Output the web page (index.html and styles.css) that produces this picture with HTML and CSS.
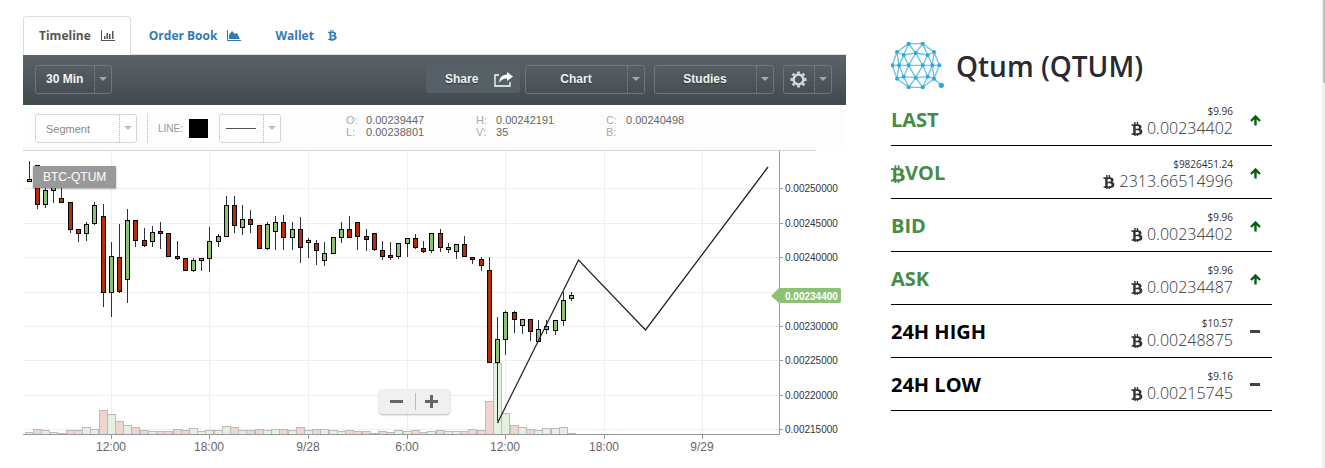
FILE: index.html
```html
<!DOCTYPE html>
<html lang="en">
<head>
<meta charset="UTF-8" />
<meta name="viewport" content="width=device-width, initial-scale=1" />
<title>Qtum (QTUM)</title>
<link rel="stylesheet" href="styles.css">
</head>
<body>

<svg class="sprite" aria-hidden="true">
  <symbol id="btc" viewBox="60 120 1220 1540">
    <path d="M1167 640q18 182-131 258 117 28 175 103t45 214q-7 71-32.500 125t-64.500 89-97 58.500-121.500 34.500-145.500 15v255h-154v-251q-80 0-122-1v252h-154v-255q-18 0-54-.5t-55-.5h-200l31-183h111q50 0 58-51v-402h16q-6-1-16-1v-287q-13-68-89-68h-111v-164l212 1q64 0 97-1v-252h154v247q82-2 122-2v-245h154v252q79 7 140 22.500t113 45 82.500 78 36.500 114.500zM952 1185q0-36-15-64t-37-46-57.500-30.500-65.500-18.500-74-9-69-3-64.500 1-47.500 1v338q8 0 37 .5t48 .5 53-1.500 58.500-4 57-8.500 55.500-14 47.500-21 39.500-30 24.500-40 9.500-51zM881 709q0-33-12.500-58.500t-30.500-42-48-28-55-16.500-61.500-8-58-2.500-54 1-39.500.5v307q5 0 34.500.5t46.500 0 50-2 55-5.500 51.500-11 48.500-18.500 37-27 27-38.500 9-51z"/>
  </symbol>
  <symbol id="up" viewBox="0 0 11 11">
    <path d="M5.500 10.500V2M1 6L5.500 1.500 10 6" fill="none" stroke="currentColor" stroke-width="2.400"/>
  </symbol>
  <symbol id="minus" viewBox="0 0 11 11">
    <path d="M0 3h10v3H0z"/>
  </symbol>
</svg>

<div class="page">
  <main class="market">
    <nav class="tabs">
      <a class="tab active" href="#timeline">Timeline
        <svg class="tab-icon" viewBox="0 0 14 11"><path d="M0 0h1v10h13v1H0zM3 6h1.500v3H3zM5.500 3H7v6H5.500zM8 4h1.500v5H8zM11 1h1.500v8H11z"/></svg>
      </a>
      <a class="tab" href="#orders">Order Book
        <svg class="tab-icon" viewBox="0 0 14 11"><path d="M0 0h1v10h13v1H0zM2 9V5l3-4 3 3 2-1 3 6z"/></svg>
      </a>
      <a class="tab" href="#wallet">Wallet
        <svg class="tab-icon" viewBox="0 0 14 11"><use href="#btc" x="4" width="9" height="11"/></svg>
      </a>
    </nav>

    <div class="toolbar">
      <div class="dropdown dark period">
        <select aria-label="Period"><option>30 Min</option><option>1 Hour</option></select>
      </div>
      <div class="actions">
        <button type="button" class="share">Share
          <svg width="19" height="16" viewBox="0 0 19 16"><path d="M5 4H1v11h15v-4" fill="none" stroke="#fff" stroke-width="1.300"/><path d="M13 1l6 4.500-6 4.500V7.500Q8 7 5 12 5 4 13 3.500z" fill="#fff"/></svg>
        </button>
        <button type="button" class="dropdown dark menu">Chart</button>
        <button type="button" class="dropdown dark menu">Studies</button>
        <button type="button" class="dropdown dark settings" aria-label="Settings">
          <svg width="17" height="17" viewBox="-9 -9 18 18"><circle r="5.200" fill="none" stroke="#d5d8da" stroke-width="2.600"/><path d="M0-6v-2.500M0 6v2.500M-6 0h-2.500M6 0h2.500M-4.500-4.500l-1.600-1.600M4.500-4.500l1.600-1.600M-4.500 4.500l-1.600 1.600M4.500 4.500l1.600 1.600" stroke="#d5d8da" stroke-width="3"/></svg>
        </button>
      </div>
    </div>

    <div class="drawbar">
      <div class="dropdown tool">
        <select aria-label="Drawing tool"><option>Segment</option><option>Line</option></select>
      </div>
      <div class="line-settings">
        <span>LINE:</span>
        <button type="button" class="swatch" aria-label="Line color"></button>
        <button type="button" class="dropdown line-style" aria-label="Line style"><span class="stroke"></span></button>
      </div>
      <dl class="ohlc">
        <dt>O:</dt><dd>0.00239447</dd>
        <dt>H:</dt><dd>0.00242191</dd>
        <dt>C:</dt><dd>0.00240498</dd>
        <dt>L:</dt><dd>0.00238801</dd>
        <dt>V:</dt><dd>35</dd>
        <dt>B:</dt><dd></dd>
      </dl>
    </div>

    <div class="chart">
      <svg class="plot" id="plot" viewBox="0 0 823 311"></svg>
      <span class="symbol">BTC-QTUM</span>
      <div class="zoom">
        <button type="button" aria-label="Zoom out"><svg width="13" height="13" viewBox="0 0 13 13"><path d="M0 5h13v3H0z"/></svg></button>
        <button type="button" aria-label="Zoom in"><svg width="13" height="13" viewBox="0 0 13 13"><path d="M0 5h13v3H0zM5 0h3v13H5z"/></svg></button>
      </div>
    </div>
  </main>

  <aside class="summary">
    <h1>
      <svg class="logo" viewBox="33 27 159 141" id="logo"></svg>
      Qtum (QTUM)
    </h1>
    <table>
      <tr class="green">
        <th scope="row">LAST</th>
        <td><small>$9.96</small><svg class="btc"><use href="#btc"/></svg> 0.00234402</td>
        <td class="trend"><svg><use href="#up"/></svg></td>
      </tr>
      <tr class="green">
        <th scope="row"><svg class="btc"><use href="#btc"/></svg>VOL</th>
        <td><small>$9826451.24</small><svg class="btc"><use href="#btc"/></svg> 2313.66514996</td>
        <td class="trend"><svg><use href="#up"/></svg></td>
      </tr>
      <tr class="green">
        <th scope="row">BID</th>
        <td><small>$9.96</small><svg class="btc"><use href="#btc"/></svg> 0.00234402</td>
        <td class="trend"><svg><use href="#up"/></svg></td>
      </tr>
      <tr class="green">
        <th scope="row">ASK</th>
        <td><small>$9.96</small><svg class="btc"><use href="#btc"/></svg> 0.00234487</td>
        <td class="trend"><svg><use href="#up"/></svg></td>
      </tr>
      <tr>
        <th scope="row">24H HIGH</th>
        <td><small>$10.57</small><svg class="btc"><use href="#btc"/></svg> 0.00248875</td>
        <td class="trend"><svg><use href="#minus"/></svg></td>
      </tr>
      <tr>
        <th scope="row">24H LOW</th>
        <td><small>$9.16</small><svg class="btc"><use href="#btc"/></svg> 0.00215745</td>
        <td class="trend"><svg><use href="#minus"/></svg></td>
      </tr>
    </table>
  </aside>
</div>

<script src="chart.js"></script>
</body>
</html>
```
FILE: styles.css
```css
* {
  box-sizing: border-box;
}
body {
  margin: 0;
  font-family: "Open Sans", sans-serif;
  color: #333;
  background: linear-gradient(#c1c1c1, #c1c1c1) right top / 2px 83px no-repeat,
    linear-gradient(#f1f1f1, #f1f1f1) right top / 3px 100% no-repeat, #fff;
  min-height: 100vh;
}
button, select {
  font: inherit;
  color: inherit;
  background: none;
  border: none;
  margin: 0;
  padding: 0;
  cursor: pointer;
}
svg {
  fill: currentColor;
}
.sprite {
  display: none;
}
.page {
  display: grid;
  grid-template-columns: 823fr 381fr;
  gap: 45px;
  padding: 16px 53px 0 23px;
}

/* Tabs */
.tabs {
  display: flex;
  gap: 2px;
  height: 39px;
  border-bottom: 1px solid #ddd;
}
.tab {
  display: flex;
  align-items: center;
  gap: 10px;
  height: 39px;
  padding: 0 15px;
  border: 1px solid transparent;
  border-radius: 4px 4px 0 0;
  font-size: 12px;
  font-weight: 700;
  color: #337ab7;
  text-decoration: none;
}
.tab.active {
  color: #555;
  background: #fff;
  border-color: #ddd;
  border-bottom-color: #fff;
}
.tab-icon {
  width: 14px;
  height: 11px;
}

/* Chart toolbars */
.toolbar, .drawbar {
  display: flex;
  align-items: center;
  font-family: "Liberation Sans", Arial, sans-serif;
}
.toolbar {
  justify-content: space-between;
  height: 50px;
  padding: 0 14px 2px 12px;
  background: linear-gradient(#5b636a, #42494d);
  color: #f2f2f2;
  font-size: 12px;
  font-weight: 700;
  text-shadow: 0 1px 1px #333;
}
.dropdown {
  position: relative;
  display: flex;
  align-items: center;
  height: 29px;
  padding-right: 18px;
  border: 1px solid #d5d5d5;
  border-radius: 3px;
  background: #fff;
}
.dropdown::before {
  content: "";
  position: absolute;
  right: 16px;
  top: 0;
  bottom: 0;
  border-left: 1px dotted #bbb;
}
.dropdown::after {
  content: "";
  position: absolute;
  right: 4px;
  top: 11px;
  border: 4px solid transparent;
  border-top: 4px solid #bbb;
  border-bottom: none;
}
.dropdown select {
  appearance: none;
  width: 100%;
  height: 100%;
  padding-left: 10px;
}
.dropdown.dark {
  background: none;
  border-color: #6f777c;
}
.dropdown.dark::before {
  border-color: #858b8f;
}
.dropdown.dark::after {
  border-top-color: #a5aaad;
}
.period {
  width: 77px;
}
.actions {
  display: flex;
  gap: 9px;
}
.share {
  display: flex;
  align-items: center;
  justify-content: space-between;
  width: 94px;
  height: 28px;
  padding: 0 7px 0 19px;
  margin-right: -4px;
  border-radius: 3px;
  background: #566067;
  text-shadow: inherit;
}
.menu {
  width: 120px;
  justify-content: center;
  text-shadow: inherit;
}
.settings {
  width: 49px;
  justify-content: center;
}
.drawbar {
  height: 45px;
  padding: 2px 12px 0;
  background: #fdfdfd;
  color: #888;
  font-size: 11px;
}
.tool {
  width: 102px;
}
.line-settings {
  display: flex;
  align-items: center;
  height: 29px;
  margin-left: 10px;
  padding-left: 10px;
  border-left: 1px dotted #bbb;
  font-size: 10px;
  color: #999;
}
.swatch {
  width: 19px;
  height: 19px;
  margin: 0 11px 0 6px;
  background: #000;
}
.line-style {
  width: 62px;
  padding-left: 6px;
}
.stroke {
  width: 30px;
  border-top: 1px solid #555;
}
.ohlc {
  display: grid;
  grid-template-columns: repeat(3, 20px 110px);
  margin: 0 0 6px 65px;
  line-height: 12px;
}
.ohlc dt {
  color: #aaa;
}
.ohlc dd {
  margin: 0;
  color: #666;
}

/* Chart */
.chart {
  position: relative;
  font-family: "Liberation Sans", Arial, sans-serif;
}
.plot {
  display: block;
  width: 100%;
}
.grid {
  fill: #eee;
}
.axis {
  fill: #999;
}
.top-line {
  fill: #d5d5d5;
}
.price {
  font-size: 10px;
  fill: #333;
}
.time {
  font-size: 12px;
  fill: #666;
  text-anchor: middle;
}
.tag {
  fill: #8cc176;
}
.last {
  font-size: 10px;
  font-weight: 700;
  fill: #fff;
}
.wick {
  fill: #2b3336;
}
.outline {
  fill: #000;
}
.body.up {
  fill: #8cc176;
}
.body.down {
  fill: #b82c0c;
}
.volume-edge {
  fill: #bbb;
}
.volume.up {
  fill: #e5f1e0;
}
.volume.down {
  fill: #f0d4cf;
}
.segment {
  fill: none;
  stroke: #222;
  stroke-width: 1.3;
}
.symbol {
  position: absolute;
  left: 10px;
  top: 16px;
  padding: 0 10px;
  background: #999;
  color: #fff;
  font-size: 12px;
  line-height: 22px;
  box-shadow: 0 1px 2px rgba(0, 0, 0, 0.3);
}
.zoom {
  position: absolute;
  left: calc(50% - 56px);
  bottom: 47px;
  display: flex;
  align-items: center;
  height: 25px;
  border-radius: 4px;
  background: #f0f0f0;
  box-shadow: 0 1px 2px rgba(0, 0, 0, 0.3);
}
.zoom button {
  display: flex;
  align-items: center;
  height: 17px;
  padding: 0 12px 0 11px;
  color: #666;
}
.zoom button + button {
  padding: 0 12px 0 9px;
  border-left: 1px solid #bbb;
}

/* Coin summary */
.summary h1 {
  display: flex;
  align-items: center;
  gap: 12px;
  height: 47px;
  margin: 28px 0 2px;
  font-size: 28px;
  font-weight: 600;
  line-height: 40px;
  padding-bottom: 4px;
  color: #292b33;
}
.logo {
  width: 53px;
  height: 47px;
  color: #2ea9e0;
}
.logo path {
  fill: none;
  stroke: #6cc2ea;
  stroke-width: 4;
}
.summary table {
  width: 100%;
  border-collapse: collapse;
}
.summary tr {
  border-bottom: 1px solid #000;
}
.summary th {
  padding: 2px 0 0;
  font-size: 20px;
  font-weight: 700;
  line-height: 24px;
  text-align: left;
  color: #000;
}
.summary .green th {
  color: #468c46;
}
.summary th .btc {
  width: 14px;
  height: 18px;
  margin: 0;
  vertical-align: -3px;
}
.summary td {
  padding: 12px 0 6px;
  font-size: 16px;
  font-weight: 300;
  line-height: 22px;
  text-align: right;
}
.summary small {
  display: block;
  font-size: 10px;
  font-weight: 400;
  line-height: 12px;
}
.btc {
  width: 12px;
  height: 14px;
  vertical-align: -2px;
}
.summary .trend {
  width: 39px;
  padding: 3px 0 0 17px;
  line-height: 0;
  text-align: left;
  color: #444;
}
.summary .green .trend {
  color: #0b5d14;
}
.trend svg {
  width: 11px;
  height: 11px;
}
```
FILE: chart.js
```js
const plot = document.getElementById('plot');

// high, open/close top, open/close bottom, low, rising, volume
const candles = [
  [10,28,31,31,1,2], [14,14,54,58,0,5], [30,39,54,57,1,4], [25,30,40,52,1,2],
  [30,47,52,52,0,1], [51,51,79,82,0,4], [78,78,83,91,0,4], [71,73,83,90,1,7],
  [51,54,73,74,1,5], [53,65,142,156,0,24], [91,105,142,166,1,20], [73,106,141,142,0,13],
  [58,69,129,152,1,9], [69,69,90,96,0,7], [77,89,95,96,0,4], [75,81,91,96,1,3],
  [71,80,83,98,0,3], [82,82,106,106,0,3], [90,105,108,109,0,5], [107,107,120,120,0,4],
  [107,109,120,121,1,6], [107,107,110,120,1,3], [76,90,108,121,1,4], [83,85,91,96,1,4],
  [45,54,86,86,1,8], [45,54,75,82,0,7], [54,68,77,84,1,4], [59,68,74,82,0,4],
  [74,74,98,98,0,5], [71,73,98,99,1,4], [65,71,81,99,1,5], [64,71,87,99,0,5],
  [71,78,87,99,1,4], [66,78,97,112,0,7], [87,89,92,107,1,4], [89,92,100,114,0,5],
  [91,102,110,115,1,5], [86,86,103,103,1,4], [71,78,87,92,1,3], [65,78,87,87,0,4],
  [71,71,86,99,0,3], [78,85,89,100,0,3], [82,82,99,100,0,1], [90,99,106,109,0,3],
  [91,104,107,109,0,2], [92,92,106,108,1,4], [87,87,93,106,1,3], [83,87,97,98,0,4],
  [90,97,101,102,0,2], [82,82,100,102,1,3], [78,82,97,101,0,4], [92,96,99,102,1,3],
  [93,93,101,108,1,3], [85,93,106,106,0,3], [106,106,109,113,0,5], [106,108,115,120,0,4],
  [106,119,212,212,0,33], [166,188,212,270,1,71], [160,161,189,204,1,21], [160,161,169,182,0,9],
  [168,168,175,183,1,7], [168,168,181,190,0,5], [169,178,191,191,1,4], [169,175,179,183,1,6],
  [169,169,180,184,1,6], [141,149,170,175,1,7], [141,144,148,150,1,1]
];
const prices = {
  37: '0.00250000', 72: '0.00245000', 106: '0.00240000', 141: '',
  175: '0.00230000', 209: '0.00225000', 244: '0.00220000', 278: '0.00215000'
};
const times = { 88: '12:00', 186: '18:00', 285: '9/28', 384: '6:00', 482: '12:00', 581: '18:00', 679: '9/29' };
const baseline = 283;
const axisX = 756;

function rect(cls, x, y, w, h) {
  return `<rect class="${cls}" x="${x}" y="${y}" width="${w}" height="${h}"/>`;
}

let crisp = '';
let labels = '';

for (const [y, label] of Object.entries(prices)) {
  crisp += rect('grid', 0, y, axisX, 1);
  if (label) {
    crisp += rect('axis', axisX, y, 4, 1);
    labels += `<text class="price" x="762" y="${+y + 4}">${label}</text>`;
  }
}
for (const [x, label] of Object.entries(times)) {
  crisp += rect('grid', x, 0, 1, baseline) + rect('axis', x, baseline, 1, 5);
  labels += `<text class="time" x="${x}" y="300">${label}</text>`;
}

const centre = i => Math.floor(6.05 + i * 8.22);

candles.forEach(([, , , , rising, volume], i) => {
  const x = Math.max(centre(i) - 4, 0);
  crisp += rect('volume-edge', x, baseline - volume, 9, volume);
  crisp += rect('volume ' + (rising ? 'up' : 'down'), x + 1, baseline - volume + 1, 7, volume - 1);
});
candles.forEach(([high, top, bottom, low, rising], i) => {
  const x = centre(i);
  crisp += rect('wick', x, high, 1, low - high);
  crisp += rect('outline', x - 2, top, 5, bottom - top);
  crisp += rect('body ' + (rising ? 'up' : 'down'), x - 1, top + 1, 3, bottom - top - 2);
});

crisp += rect('axis', 0, baseline, axisX + 1, 1) + rect('axis', axisX, 0, 1, baseline);
crisp += rect('top-line', 0, -1, 793, 1);

plot.innerHTML = `<g transform="translate(0 1)">
  <g shape-rendering="crispEdges">${crisp}</g>
  <path class="segment" d="M474.500 272L555.500 109L622.500 179L745 16"/>
  ${labels}
  <path class="tag" d="M748 145l8-8h60q2 0 2 2v11q0 2-2 2h-60z"/>
  <text class="last" x="762" y="149">0.00234400</text>
</g>`;

// Logo: nodes of the sphere and the links between them
const nodes = [
  [86,32], [128,32], [162,57], [178,97], [162,137], [128,163], [86,163], [51,137], [37,97], [51,57],
  [71,66], [107,60], [143,66], [157,97], [143,131], [107,134], [71,131], [57,97], [86,97], [128,97]
];
const links = [
  [0,1],[1,2],[2,3],[3,4],[4,5],[5,6],[6,7],[7,8],[8,9],[9,0],
  [0,10],[0,11],[1,11],[1,12],[2,12],[2,13],[13,4],[4,14],[5,14],[5,15],[6,15],[6,16],[7,16],[7,17],[17,9],[9,10],
  [10,11],[11,12],[12,13],[13,14],[14,15],[15,16],[16,17],[17,10],
  [8,3],[18,10],[18,11],[19,11],[19,12],[19,14],[19,15],[18,15],[18,16]
];
document.getElementById('logo').innerHTML =
  `<path d="${links.map(([a, b]) => `M${nodes[a]}L${nodes[b]}`).join('')}M162,137L184,157"/>` +
  nodes.map(([x, y]) => `<circle cx="${x}" cy="${y}" r="6"/>`).join('') +
  '<circle cx="184" cy="157" r="8"/>';
```
